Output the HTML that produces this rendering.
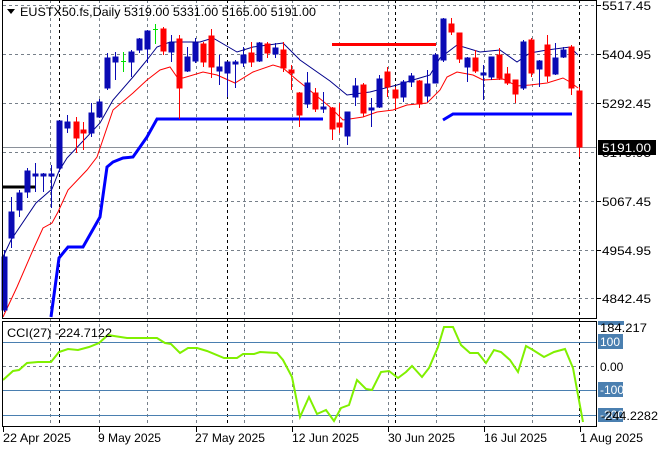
<!DOCTYPE html>
<html><head><meta charset="utf-8"><style>
html,body{margin:0;padding:0;background:#fff;}
svg{display:block;font-family:"Liberation Sans",sans-serif;}
</style></head><body>
<svg width="660" height="450" viewBox="0 0 660 450" xmlns="http://www.w3.org/2000/svg">
<rect width="660" height="450" fill="#fff"/>
<!-- grid -->
<g stroke="#77808a" stroke-width="1" stroke-dasharray="3,3" shape-rendering="crispEdges">
<line x1="3" y1="5.5" x2="596" y2="5.5"/><line x1="3" y1="54.5" x2="596" y2="54.5"/><line x1="3" y1="103.5" x2="596" y2="103.5"/><line x1="3" y1="152.5" x2="596" y2="152.5"/><line x1="3" y1="201.5" x2="596" y2="201.5"/><line x1="3" y1="250.5" x2="596" y2="250.5"/><line x1="3" y1="298.5" x2="596" y2="298.5"/>
<line x1="50.5" y1="0" x2="50.5" y2="427"/><line x1="99.5" y1="0" x2="99.5" y2="427"/><line x1="147.5" y1="0" x2="147.5" y2="427"/><line x1="196.5" y1="0" x2="196.5" y2="427"/><line x1="244.5" y1="0" x2="244.5" y2="427"/><line x1="292.5" y1="0" x2="292.5" y2="427"/><line x1="339.5" y1="0" x2="339.5" y2="427"/><line x1="388.5" y1="0" x2="388.5" y2="427"/><line x1="436.5" y1="0" x2="436.5" y2="427"/><line x1="484.5" y1="0" x2="484.5" y2="427"/><line x1="532.5" y1="0" x2="532.5" y2="427"/>
<line x1="3" y1="366.5" x2="596" y2="366.5"/>
</g>
<g stroke="#000" stroke-width="1" stroke-dasharray="3,3" shape-rendering="crispEdges">
<line x1="59.5" y1="0" x2="59.5" y2="427"/><line x1="227.5" y1="0" x2="227.5" y2="427"/><line x1="395.5" y1="0" x2="395.5" y2="427"/><line x1="579.5" y1="0" x2="579.5" y2="427"/>
</g>
<line x1="3" y1="147.5" x2="596" y2="147.5" stroke="#8a9099" shape-rendering="crispEdges"/>
<!-- MAs -->
<polyline fill="none" stroke="#ff0000" stroke-width="1" points="3,317 17,287 33,250 43,228 52,223 58,212 68,190 87,170 97,157 113,110 133,93 147,80 160,70 170,67 177,77 183,78 203,72 217,75 235,83 253,72 273,65 283,68 297,80 307,88 330,107 343,120 363,117 377,112 393,110 407,105 427,103 440,90 447,77 457,72 473,75 483,80 503,79 517,86 530,85 547,83 563,78 570,82 578,88"/>
<polyline fill="none" stroke="#00008b" stroke-width="1" points="3,257 11,240 36,203 52,189 59,171 67,158 100,123 113,100 133,77 147,60 157,47 170,42 200,42 213,38 237,52 253,47 283,43 300,60 330,81 347,95 370,92 397,85 413,80 430,75 440,58 457,45 480,52 500,50 517,62 530,53 547,50 570,47 578,55"/>
<!-- thick lines -->
<polyline fill="none" stroke="#0000ff" stroke-width="3" points="51,317 59,258 68,247 83,247 100,217 107,167 113,162 123,158 133,157 147,137 157,119 323,119"/>
<polyline fill="none" stroke="#0000ff" stroke-width="3" points="443,120 453,114 572,114"/>
<line x1="332" y1="44.5" x2="436" y2="44.5" stroke="#ff0000" stroke-width="3"/>
<line x1="3" y1="187" x2="36" y2="187" stroke="#000" stroke-width="3"/>
<!-- candles -->
<g shape-rendering="crispEdges">
<g stroke="#0a0ab4" fill="#0a0ab4">
<line x1="4.5" y1="250" x2="4.5" y2="312"/><rect x="2" y="257" width="5" height="53"/>
<line x1="11.5" y1="197" x2="11.5" y2="248"/><rect x="9" y="212" width="5" height="26"/>
<line x1="19.5" y1="190" x2="19.5" y2="217"/><rect x="17" y="193" width="5" height="17"/>
<line x1="27.5" y1="168" x2="27.5" y2="198"/><rect x="25" y="171" width="5" height="21"/>
<line x1="35.5" y1="163" x2="35.5" y2="192"/><rect x="33" y="174" width="5" height="2"/>
<line x1="43.5" y1="173" x2="43.5" y2="192"/><rect x="41" y="174" width="5" height="2"/>
<line x1="51.5" y1="165" x2="51.5" y2="208"/><rect x="49" y="174" width="5" height="2"/>
<line x1="59.5" y1="121" x2="59.5" y2="172"/><rect x="57" y="121" width="5" height="47"/>
<line x1="67.5" y1="115" x2="67.5" y2="133"/><rect x="65" y="122" width="5" height="6"/>
<line x1="91.5" y1="103" x2="91.5" y2="137"/><rect x="89" y="113" width="5" height="20"/>
<line x1="99.5" y1="99" x2="99.5" y2="118"/><rect x="97" y="102" width="5" height="15"/>
<line x1="107.5" y1="53" x2="107.5" y2="90"/><rect x="105" y="58" width="5" height="30"/>
<line x1="115.5" y1="52" x2="115.5" y2="80"/><rect x="113" y="57" width="5" height="5"/>
<line x1="131.5" y1="50" x2="131.5" y2="77"/><rect x="129" y="52" width="5" height="10"/>
<line x1="139.5" y1="38" x2="139.5" y2="53"/><rect x="137" y="39" width="5" height="11"/>
<line x1="147.5" y1="30" x2="147.5" y2="63"/><rect x="145" y="31" width="5" height="18"/>
<line x1="171.5" y1="35" x2="171.5" y2="62"/><rect x="169" y="43" width="5" height="9"/>
<line x1="187.5" y1="47" x2="187.5" y2="72"/><rect x="185" y="57" width="5" height="14"/>
<line x1="195.5" y1="38" x2="195.5" y2="63"/><rect x="193" y="43" width="5" height="18"/>
<line x1="219.5" y1="55" x2="219.5" y2="85"/><rect x="217" y="67" width="5" height="4"/>
<line x1="227.5" y1="62" x2="227.5" y2="97"/><rect x="225" y="62" width="5" height="11"/>
<line x1="235.5" y1="60" x2="235.5" y2="88"/><rect x="233" y="62" width="5" height="2"/>
<line x1="243.5" y1="47" x2="243.5" y2="67"/><rect x="241" y="55" width="5" height="8"/>
<line x1="259.5" y1="42" x2="259.5" y2="62"/><rect x="257" y="43" width="5" height="18"/>
<line x1="275.5" y1="43" x2="275.5" y2="58"/><rect x="273" y="48" width="5" height="6"/>
<line x1="307.5" y1="72" x2="307.5" y2="108"/><rect x="305" y="83" width="5" height="21"/>
<line x1="323.5" y1="92" x2="323.5" y2="113"/><rect x="321" y="107" width="5" height="2"/>
<line x1="347.5" y1="112" x2="347.5" y2="145"/><rect x="345" y="112" width="5" height="24"/>
<line x1="355.5" y1="78" x2="355.5" y2="106"/><rect x="353" y="86" width="5" height="11"/>
<line x1="371.5" y1="98" x2="371.5" y2="127"/><rect x="369" y="108" width="5" height="2"/>
<line x1="379.5" y1="75" x2="379.5" y2="108"/><rect x="377" y="79" width="5" height="28"/>
<line x1="403.5" y1="80" x2="403.5" y2="102"/><rect x="401" y="82" width="5" height="15"/>
<line x1="411.5" y1="73" x2="411.5" y2="87"/><rect x="409" y="76" width="5" height="6"/>
<line x1="427.5" y1="70" x2="427.5" y2="102"/><rect x="425" y="84" width="5" height="12"/>
<line x1="435.5" y1="53" x2="435.5" y2="83"/><rect x="433" y="55" width="5" height="28"/>
<line x1="443.5" y1="18" x2="443.5" y2="62"/><rect x="441" y="19" width="5" height="41"/>
<line x1="467.5" y1="57" x2="467.5" y2="82"/><rect x="465" y="58" width="5" height="9"/>
<line x1="483.5" y1="65" x2="483.5" y2="100"/><rect x="481" y="73" width="5" height="2"/>
<line x1="491.5" y1="57" x2="491.5" y2="80"/><rect x="489" y="57" width="5" height="20"/>
<line x1="523.5" y1="40" x2="523.5" y2="90"/><rect x="521" y="42" width="5" height="46"/>
<line x1="539.5" y1="60" x2="539.5" y2="87"/><rect x="537" y="61" width="5" height="8"/>
<line x1="555.5" y1="43" x2="555.5" y2="75"/><rect x="553" y="58" width="5" height="16"/>
<line x1="563.5" y1="47" x2="563.5" y2="58"/><rect x="561" y="50" width="5" height="7"/>
</g>
<g stroke="#ff0000" fill="#ff0000">
<line x1="76.5" y1="117" x2="76.5" y2="153"/><rect x="74" y="122" width="5" height="16"/>
<line x1="83.5" y1="122" x2="83.5" y2="150"/><rect x="81" y="130" width="5" height="3"/>
<line x1="163.5" y1="27" x2="163.5" y2="55"/><rect x="161" y="29" width="5" height="22"/>
<line x1="179.5" y1="35" x2="179.5" y2="119"/><rect x="177" y="39" width="5" height="49"/>
<line x1="203.5" y1="42" x2="203.5" y2="67"/><rect x="201" y="44" width="5" height="18"/>
<line x1="211.5" y1="29" x2="211.5" y2="78"/><rect x="209" y="36" width="5" height="31"/>
<line x1="251.5" y1="42" x2="251.5" y2="67"/><rect x="249" y="53" width="5" height="9"/>
<line x1="267.5" y1="42" x2="267.5" y2="58"/><rect x="265" y="44" width="5" height="9"/>
<line x1="283.5" y1="42" x2="283.5" y2="72"/><rect x="281" y="50" width="5" height="18"/>
<line x1="291.5" y1="65" x2="291.5" y2="90"/><rect x="289" y="70" width="5" height="3"/>
<line x1="299.5" y1="92" x2="299.5" y2="127"/><rect x="297" y="93" width="5" height="22"/>
<line x1="315.5" y1="88" x2="315.5" y2="112"/><rect x="313" y="93" width="5" height="16"/>
<line x1="332.5" y1="107" x2="332.5" y2="140"/><rect x="330" y="108" width="5" height="21"/>
<line x1="339.5" y1="103" x2="339.5" y2="133"/><rect x="337" y="123" width="5" height="4"/>
<line x1="363.5" y1="83" x2="363.5" y2="117"/><rect x="361" y="85" width="5" height="28"/>
<line x1="387.5" y1="67" x2="387.5" y2="97"/><rect x="385" y="72" width="5" height="15"/>
<line x1="395.5" y1="87" x2="395.5" y2="110"/><rect x="393" y="90" width="5" height="8"/>
<line x1="419.5" y1="80" x2="419.5" y2="108"/><rect x="417" y="81" width="5" height="23"/>
<line x1="451.5" y1="18" x2="451.5" y2="35"/><rect x="449" y="24" width="5" height="8"/>
<line x1="459.5" y1="33" x2="459.5" y2="63"/><rect x="457" y="33" width="5" height="26"/>
<line x1="475.5" y1="50" x2="475.5" y2="73"/><rect x="473" y="58" width="5" height="13"/>
<line x1="499.5" y1="48" x2="499.5" y2="80"/><rect x="497" y="55" width="5" height="23"/>
<line x1="507.5" y1="67" x2="507.5" y2="85"/><rect x="505" y="74" width="5" height="9"/>
<line x1="515.5" y1="80" x2="515.5" y2="103"/><rect x="513" y="80" width="5" height="14"/>
<line x1="531.5" y1="38" x2="531.5" y2="77"/><rect x="529" y="40" width="5" height="33"/>
<line x1="547.5" y1="35" x2="547.5" y2="82"/><rect x="545" y="45" width="5" height="31"/>
<line x1="571.5" y1="45" x2="571.5" y2="95"/><rect x="569" y="47" width="5" height="41"/>
<line x1="579.5" y1="87" x2="579.5" y2="157"/><rect x="577" y="91" width="5" height="56"/>
</g>
<g stroke="#00e000">
<line x1="123.5" y1="52" x2="123.5" y2="72"/><line x1="121" y1="61.5" x2="126" y2="61.5"/>
<line x1="155.5" y1="24" x2="155.5" y2="44"/><line x1="153" y1="29.5" x2="158" y2="29.5"/>
</g>
</g>
<!-- CCI levels -->
<g stroke="#4a7fb0" shape-rendering="crispEdges">
<line x1="3" y1="342.5" x2="596" y2="342.5"/><line x1="3" y1="390.5" x2="596" y2="390.5"/><line x1="3" y1="415.5" x2="596" y2="415.5"/>
</g>
<polyline fill="none" stroke="#80f000" stroke-width="2" points="3,380 13,371 19,370 27,363 38,362 51,362 59,352 68,349 78,350 89,347 99,343 108,335 114,336 127,338 157,338 165,343 171,344 180,353 188,348 197,348 207,351 224,358 237,358 243,354 254,354 260,352 277,353 283,360 292,377 300,417 309,397 317,414 326,410 334,421 341,408 349,405 357,380 366,389 372,390 381,372 389,371 398,378 406,372 412,366 422,377 429,368 438,347 444,327 453,327 461,345 470,353 478,353 486,363 494,350 501,352 510,360 518,372 526,346 533,350 544,357 554,352 565,349 573,368 583,422"/>
<!-- frames -->
<g fill="none" stroke="#000" shape-rendering="crispEdges">
<rect x="2.5" y="0.5" width="594" height="318"/>
<rect x="2.5" y="321.5" width="594" height="105"/>
</g>
<!-- axis ticks -->
<g stroke="#000" shape-rendering="crispEdges">
<line x1="597" y1="5.5" x2="601" y2="5.5"/><line x1="597" y1="54.5" x2="601" y2="54.5"/><line x1="597" y1="103.5" x2="601" y2="103.5"/><line x1="597" y1="201.5" x2="601" y2="201.5"/><line x1="597" y1="250.5" x2="601" y2="250.5"/><line x1="597" y1="298.5" x2="601" y2="298.5"/>
<line x1="3.5" y1="427" x2="3.5" y2="432"/><line x1="99.5" y1="427" x2="99.5" y2="432"/><line x1="196.5" y1="427" x2="196.5" y2="432"/><line x1="292.5" y1="427" x2="292.5" y2="432"/><line x1="388.5" y1="427" x2="388.5" y2="432"/><line x1="484.5" y1="427" x2="484.5" y2="432"/><line x1="580.5" y1="427" x2="580.5" y2="432"/>
</g>
<!-- text -->
<g font-size="12" fill="#000">
<path d="M7,9 L15,9 L11,14 Z" fill="#000"/>
<text x="20" y="16" textLength="296" lengthAdjust="spacingAndGlyphs">EUSTX50.fs,Daily  5319.00 5331.00 5165.00 5191.00</text>
<text x="602" y="10" textLength="49" lengthAdjust="spacingAndGlyphs">5517.45</text>
<text x="602" y="59" textLength="49" lengthAdjust="spacingAndGlyphs">5404.95</text>
<text x="602" y="108" textLength="49" lengthAdjust="spacingAndGlyphs">5292.45</text>
<text x="602" y="157" textLength="49" lengthAdjust="spacingAndGlyphs">5179.95</text>
<text x="602" y="206" textLength="49" lengthAdjust="spacingAndGlyphs">5067.45</text>
<text x="602" y="255" textLength="49" lengthAdjust="spacingAndGlyphs">4954.95</text>
<text x="602" y="303" textLength="49" lengthAdjust="spacingAndGlyphs">4842.45</text>
</g>
<rect x="598" y="140" width="58" height="15" fill="#000"/>
<text x="602" y="152" font-size="12" fill="#fff" textLength="49" lengthAdjust="spacingAndGlyphs">5191.00</text>
<!-- CCI labels -->
<text x="7" y="337" font-size="12" fill="#000" textLength="105" lengthAdjust="spacingAndGlyphs">CCI(27) -224.7122</text>
<rect x="598" y="321" width="26" height="4" fill="#4a7fb0"/>
<rect x="598" y="334" width="25" height="15" fill="#4a7fb0"/>
<rect x="598" y="382" width="25" height="15" fill="#4a7fb0"/>
<rect x="598" y="408" width="25" height="14" fill="#4a7fb0"/>
<g font-size="12">
<text x="600" y="332" fill="#000" textLength="47" lengthAdjust="spacingAndGlyphs">184.217</text>
<text x="600" y="346" fill="#fff">100</text>
<text x="600" y="371" fill="#000">0.00</text>
<text x="600" y="394" fill="#fff">-100</text>
<text x="600" y="419" fill="#fff">-200</text>
<text x="601" y="420" fill="#000" textLength="57" lengthAdjust="spacingAndGlyphs">-244.2282</text>
</g>
<g font-size="12" fill="#000">
<text x="3" y="442" textLength="68" lengthAdjust="spacingAndGlyphs">22 Apr 2025</text>
<text x="98" y="442" textLength="63" lengthAdjust="spacingAndGlyphs">9 May 2025</text>
<text x="195" y="442" textLength="70" lengthAdjust="spacingAndGlyphs">27 May 2025</text>
<text x="292" y="442" textLength="67" lengthAdjust="spacingAndGlyphs">12 Jun 2025</text>
<text x="388" y="442" textLength="67" lengthAdjust="spacingAndGlyphs">30 Jun 2025</text>
<text x="484" y="442" textLength="63" lengthAdjust="spacingAndGlyphs">16 Jul 2025</text>
<text x="580" y="442" textLength="63" lengthAdjust="spacingAndGlyphs">1 Aug 2025</text>
</g>
</svg>
</body></html>
